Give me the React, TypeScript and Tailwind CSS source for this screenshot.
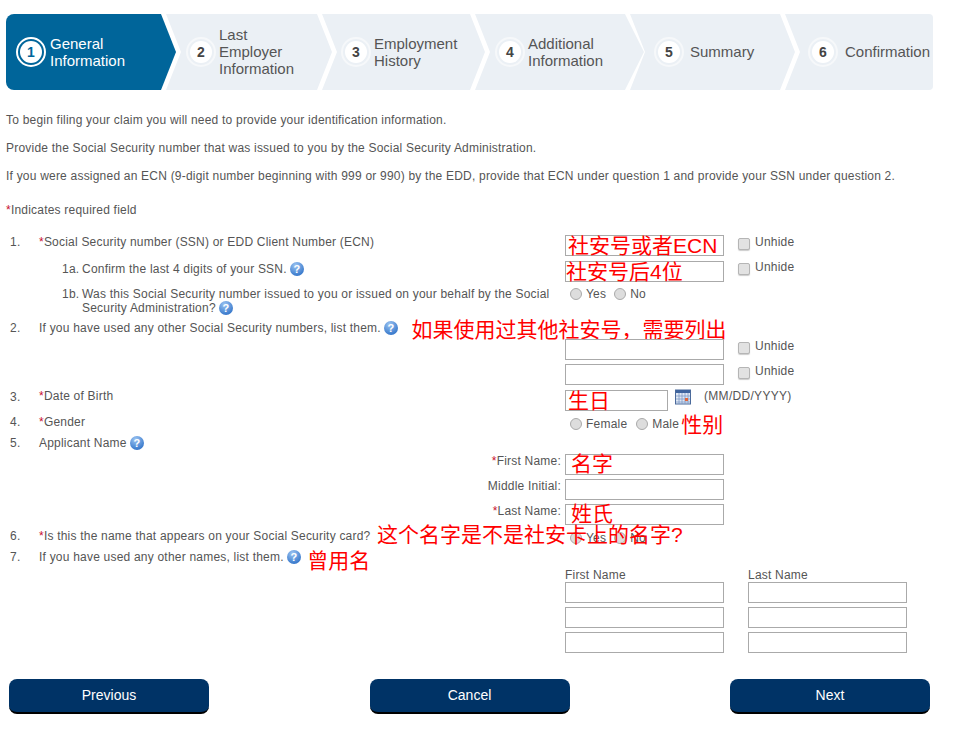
const cjk = "font-['Liberation_Sans','Noto_Sans_CJK_SC',sans-serif] text-[21px] leading-[24px] tracking-normal text-[#ff0000] whitespace-nowrap";

const steps = [
	{ n: 1, label: ["General", "Information"], w: "w-[170px]", mr: "-mr-[10px]", pl: "pl-[10px]", gap: "gap-[4px]", clip: "[clip-path:polygon(0_0,155px_0,170px_50%,155px_100%,0_100%)] rounded-l-[8px]" },
	{ n: 2, label: ["Last", "Employer", "Information"], w: "w-[166px]", mr: "-mr-[10px]", pl: "pl-[20px]", gap: "gap-[3px]", clip: "[clip-path:polygon(0_0,151px_0,166px_50%,151px_100%,0_100%,15px_50%)]" },
	{ n: 3, label: ["Employment", "History"], w: "w-[163px]", mr: "-mr-[10px]", pl: "pl-[19px]", gap: "gap-[3px]", clip: "[clip-path:polygon(0_0,148px_0,163px_50%,148px_100%,0_100%,15px_50%)]" },
	{ n: 4, label: ["Additional", "Information"], w: "w-[169px]", mr: "-mr-[14px]", pl: "pl-[20px]", gap: "gap-[3px]", clip: "[clip-path:polygon(0_0,150px_0,169px_50%,150px_100%,0_100%,15px_50%)]" },
	{ n: 5, label: ["Summary"], w: "w-[165px]", mr: "-mr-[10px]", pl: "pl-[24px]", gap: "gap-[6px]", clip: "[clip-path:polygon(0_0,150px_0,165px_50%,150px_100%,0_100%,15px_50%)]" },
	{ n: 6, label: ["Confirmation"], w: "w-[148px]", mr: "", pl: "pl-[23px]", gap: "gap-[7px]", clip: "[clip-path:polygon(0_0,100%_0,100%_100%,0_100%,15px_50%)] rounded-r-[4px]" },
];

function Stepper() {
	return (
		<div className="flex h-[76px] tracking-normal">
			{steps.map((s) => {
				const active = s.n === 1;
				return (
					<div
						key={s.n}
						className={`${s.w} ${s.mr} ${s.pl} ${s.gap} ${s.clip} flex shrink-0 items-center ${active ? "bg-[#00659a] text-white" : "bg-[#ebf0f5] text-[#555555]"}`}
					>
						<div className={`flex h-[30px] w-[30px] shrink-0 items-center justify-center rounded-full border-[2px] ${active ? "border-white" : "border-[#f6f8fa]"}`}>
							<div className={`flex h-[22px] w-[22px] items-center justify-center rounded-full bg-white text-[14px] font-bold ${active ? "text-[#00659a]" : "text-[#444444]"}`}>
								{s.n}
							</div>
						</div>
						<div className={`text-[15px] leading-[17px] whitespace-nowrap ${s.label.length === 2 ? "" : "-mt-[1px]"}`}>
							{s.label.map((l) => (
								<div key={l}>{l}</div>
							))}
						</div>
					</div>
				);
			})}
		</div>
	);
}

function Help() {
	return (
		<svg viewBox="0 0 14 14" className="inline-block h-[14px] w-[14px] shrink-0 align-[-3px]">
			<defs>
				<radialGradient id="help" cx="40%" cy="25%" r="80%">
					<stop offset="0%" stopColor="#9cc4f2" />
					<stop offset="100%" stopColor="#2f72c8" />
				</radialGradient>
			</defs>
			<circle cx="7" cy="7" r="7" fill="url(#help)" />
			<text x="7" y="11" textAnchor="middle" fontSize="11" fontWeight="700" fill="#ffffff" fontFamily="Liberation Sans">?</text>
		</svg>
	);
}

function Box({ w = "w-[159px]", children }: { w?: string; children?: React.ReactNode }) {
	return (
		<div className={`${w} h-[21px] shrink-0 border border-[#aaaaaa] bg-white pl-[2px] ${cjk} flex items-center`}>{children}</div>
	);
}

function Unhide({ className = "" }: { className?: string }) {
	return (
		<div className={`ml-[14px] flex items-start gap-[5px] text-[12px] leading-[14px] text-[#555555] ${className}`}>
			<span className="mt-[3px] h-[12px] w-[12px] rounded-[2px] border border-[#b5b5b5] bg-[#e2e2e2] shadow-[0_1px_1px_#cccccc]" />
			<span>Unhide</span>
		</div>
	);
}

function Radio({ label, className = "" }: { label: string; className?: string }) {
	return (
		<div className={`flex items-center gap-[4px] text-[12px] leading-[14px] text-[#555555] ${className}`}>
			<span className="h-[12px] w-[12px] rounded-full border border-[#aaaaaa] bg-[#dddddd]" />
			<span>{label}</span>
		</div>
	);
}

function Req() {
	return <span className="text-[#c8102e]">*</span>;
}

function Row({ n, h, children, right }: { n?: string; h: string; children?: React.ReactNode; right?: React.ReactNode }) {
	return (
		<div className={`flex items-start ${h}`}>
			<div className="flex w-[559px] shrink-0">
				<div className="w-[33px] shrink-0 pl-[4px]">{n}</div>
				<div className="min-w-0 flex-1">{children}</div>
			</div>
			{right}
		</div>
	);
}

function NameField({ label, req, value }: { label: string; req?: boolean; value?: string }) {
	return (
		<Row h="h-[25px]" right={<Box><span className="-mt-[2px] ml-[3px]">{value}</span></Box>}>
			<div className="pr-[4px] text-right">
				{req && <Req />}
				{label}
			</div>
		</Row>
	);
}

function Calendar() {
	return (
		<svg viewBox="0 0 16 16" className="-mt-[1px] ml-[7px] h-[16px] w-[16px] shrink-0">
			<rect x="0.5" y="1" width="15" height="14" fill="#dfe8f4" stroke="#4b6a9b" />
			<rect x="1" y="1" width="14" height="3" fill="#3f649e" />
			<path d="M1 7h14M1 10h14M1 13h14M4 4v11M7 4v11M10 4v11M13 4v11" stroke="#7f9bc6" strokeWidth="0.8" />
			<rect x="10" y="9" width="3" height="3" fill="#e0663c" />
		</svg>
	);
}

export default function App() {
	return (
		<div className="min-h-[745px] bg-white px-[6px] pt-[14px] font-['Liberation_Sans',Arial,sans-serif] text-[12px] leading-[14px] tracking-[0.21px] text-[#555555]">
			<Stepper />

			<p className="mt-[23px]">To begin filing your claim you will need to provide your identification information.</p>
			<p className="mt-[14px]">Provide the Social Security number that was issued to you by the Social Security Administration.</p>
			<p className="mt-[14px]">If you were assigned an ECN (9-digit number beginning with 999 or 990) by the EDD, provide that ECN under question 1 and provide your SSN under question 2.</p>
			<p className="mt-[20px]"><Req />Indicates required field</p>

			<div className="mt-[18px]">
				<Row n="1." h="h-[26px]" right={<><Box>社安号或者ECN</Box><Unhide /></>}>
					<Req />Social Security number (SSN) or EDD Client Number (ECN)
				</Row>
				<Row h="h-[25px]" right={<><Box><span className="-ml-[2px]">社安号后4位</span></Box><Unhide className="-mt-[1px]" /></>}>
					<div className="flex pt-[1px] pl-[23px]">
						<span className="w-[20px]">1a.</span>
						<span>Confirm the last 4 digits of your SSN. <Help /></span>
					</div>
				</Row>
				<Row h="h-[35px]" right={<div className="flex gap-[8px] pt-[1px] pl-[5px]"><Radio label="Yes" /><Radio label="No" /></div>}>
					<div className="flex pt-[1px] pl-[23px]">
						<span className="w-[20px] shrink-0">1b.</span>
						<span>Was this Social Security number issued to you or issued on your behalf by the Social Security Administration? <Help /></span>
					</div>
				</Row>
				<Row n="2." h="h-[18px]">
					<div className="flex items-start gap-[13px]">
						<span className="whitespace-nowrap">If you have used any other Social Security numbers, list them. <Help /></span>
						<span className={`${cjk} -mt-[3px]`}>如果使用过其他社安号，需要列出</span>
					</div>
				</Row>
				<Row h="h-[25px]" right={<><Box /><Unhide /></>} />
				<Row h="h-[26px]" right={<><Box /><Unhide /></>} />
				<Row n="3." h="h-[25px]" right={
					<div className="flex items-start">
						<Box w="w-[103px]">生日</Box>
						<Calendar />
						<span className="-mt-[1px] ml-[13px] tracking-[0.3px]">(MM/DD/YYYY)</span>
					</div>
				}>
					<div className="-mt-[1px]"><Req />Date of Birth</div>
				</Row>
				<Row n="4." h="h-[21px]" right={
					<div className="flex items-start pl-[5px]">
						<Radio label="Female" className="mt-[2px]" />
						<Radio label="Male" className="mt-[2px] ml-[9px]" />
						<span className={`${cjk} -mt-[2px] ml-[2px]`}>性别</span>
					</div>
				}>
					<Req />Gender
				</Row>
				<Row n="5." h="h-[21px]">
					Applicant Name <Help />
				</Row>
				<div className="-mt-[3px]">
					<NameField label="First Name:" req value="名字" />
					<NameField label="Middle Initial:" />
					<NameField label="Last Name:" req value="姓氏" />
				</div>
				<div className="relative">
					<Row n="6." h="h-[21px]" right={<div className="mt-[2px] flex gap-[8px] pl-[5px]"><Radio label="Yes" /><Radio label="No" /></div>}>
						<Req />Is this the name that appears on your Social Security card?
					</Row>
					<span className={`${cjk} absolute top-[-6px] left-[371px]`}>这个名字是不是社安卡上的名字?</span>
				</div>
				<Row n="7." h="h-[18px]">
					<div className="flex items-start gap-[6px]">
						<span className="whitespace-nowrap">If you have used any other names, list them. <Help /></span>
						<span className={`${cjk} -mt-[1px]`}>曾用名</span>
					</div>
				</Row>
				<div className="ml-[559px] grid w-[342px] grid-cols-[159px_159px] gap-x-[24px] gap-y-[4px]">
					<div className="-mb-[4px]">First Name</div>
					<div className="-mb-[4px]">Last Name</div>
					<Box /><Box />
					<Box /><Box />
					<Box /><Box />
				</div>
			</div>

			<div className="mt-[26px] ml-[3px] flex w-[921px] justify-between">
				{["Previous", "Cancel", "Next"].map((b) => (
					<button key={b} type="button" className="h-[35px] w-[200px] rounded-[8px] border-b-2 border-black bg-[#003366] pb-[1px] text-[14px] tracking-normal text-white">
						{b}
					</button>
				))}
			</div>
		</div>
	);
}
